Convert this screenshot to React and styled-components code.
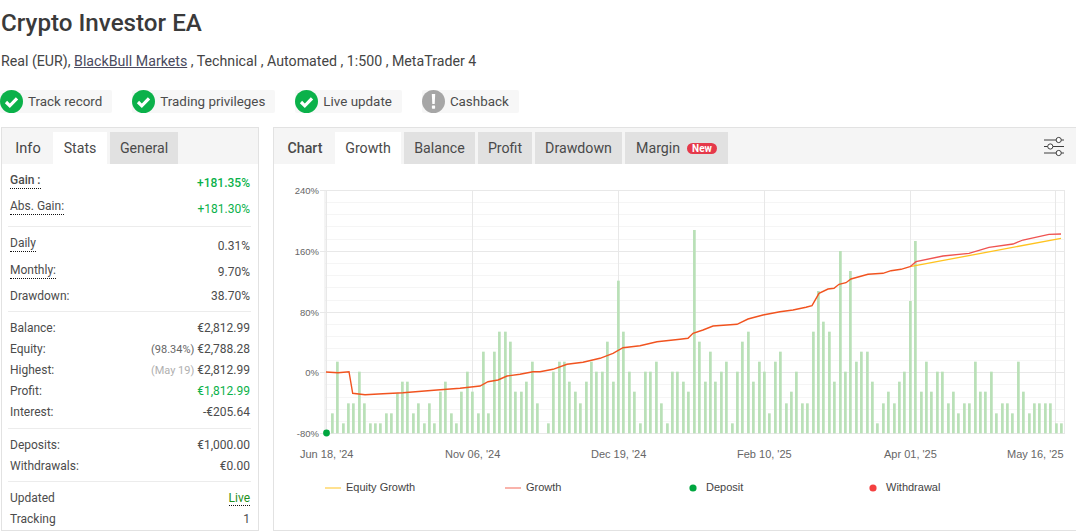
import React from "react";
import styled, { createGlobalStyle } from "styled-components";

const Global = createGlobalStyle`
  html, body { margin: 0; padding: 0; background: #fff; }
  body { font-family: Roboto, "Liberation Sans", sans-serif; color: #444; overflow: hidden; }
`;
const Page = styled.div`width: 1076px; height: 532px; overflow: hidden; padding-left: 1px; box-sizing: border-box;`;
const Title = styled.h1`margin: 0; padding-top: 8px; font-size: 24.2px; line-height: 30px; font-weight: 500; color: #3a3a3a;`;
const Sub = styled.div`margin-top: 13px; font-size: 14.2px; line-height: 20px; color: #444;`;
const BrokerLink = styled.a`color: #4a4a5e; text-decoration: underline;`;
const Badges = styled.div`display: flex; gap: 20px; margin-top: 19px; margin-left: -1px;`;
const Badge = styled.div`display: flex; align-items: center; gap: 5px; height: 23px; padding-right: 10px; background: #f7f7f7; font-size: 13.4px; color: #4c4c4c; border-radius: 2px;`;
const Main = styled.div`display: flex; gap: 14px; margin-top: 14px; height: 404px; align-items: stretch;`;
const Panel = styled.section`
  box-sizing: border-box; border: 1px solid #e2e2e2; display: flex; flex-direction: column;
  width: ${p => p.$w}; ${p => p.$open ? "border-right: none; margin-right: -1px;" : ""}
`;
const TabBar = styled.div`display: flex; align-items: flex-end; gap: 3px; height: 36px; flex: none; background: #f5f5f5; position: relative;`;
const Tab = styled.div`
  height: 32px; box-sizing: border-box; display: flex; align-items: center; justify-content: center; gap: 7px;
  font-size: 14.2px; color: #4a4a4a; width: ${p => p.$w}px; flex: none;
  padding-left: ${p => p.$kind === "head" ? 4 : 0}px;
  background: ${p => p.$kind === "on" ? "#fff" : p.$kind === "off" ? "#e1e1e1" : "transparent"};
  font-weight: ${p => p.$kind === "head" ? 500 : 400};
`;
const InfoTab = styled(Tab)`font-size: 14.6px; font-weight: 400; color: #444;`;
const NewTag = styled.span`display: inline-block; background: #e5394a; color: #fff; font-size: 10px; font-weight: 700; line-height: 11px; padding: 0 5px; border-radius: 6px;`;
const Settings = styled.div`position: absolute; right: 13px; top: 8px; width: 20px; height: 21px;`;
const Stats = styled.div`flex: 1; padding: 0 7px 0 6px;`;
const Group = styled.div`padding: ${p => p.$pad || "6px 0 5px"}; border-bottom: ${p => p.$last ? "none" : "1px solid #ececec"};`;
const Row = styled.div`
  display: flex; justify-content: space-between; padding: 0 1px 0 2px; font-size: 12px; color: #4c4c4c;
  height: ${p => p.$tall ? 26 : 21}px; align-items: ${p => p.$tall ? "flex-start" : "center"};
`;
const Label = styled.span`font-size: 12px; line-height: 15px; white-space: nowrap;`;
const Dotted = styled(Label)`border-bottom: 1px dotted #111; font-weight: ${p => p.$bold ? 500 : 400}; margin-top: ${p => p.$low ? 3 : 2}px;`;
const Value = styled.span`
  white-space: nowrap; line-height: 15px; margin-top: ${p => p.$drop ? 5 : 0}px;
  color: ${p => p.$green ? "#0bb14a" : "#4c4c4c"}; font-weight: ${p => p.$bold ? 500 : 400};
`;
const Muted = styled.span`color: ${p => p.$light ? "#b0b0b0" : "#666"}; font-size: 11px;`;
const LiveLink = styled.span`color: #1f9020; border-bottom: 1px dotted #111; line-height: 14px;`;
const ChartWrap = styled.div`flex: 1; min-height: 0;`;
const ChartSvg = styled.svg`display: block; width: 802px; height: 367px; font-family: "Liberation Sans", Arial, sans-serif;`;

const Check = () => (
  <svg width="23" height="23" viewBox="0 0 23 23">
    <circle cx="11.5" cy="11.5" r="11.5" fill="#0bb14a" />
    <path d="M6 12l3.8 3.8L17 8.3" fill="none" stroke="#fff" strokeWidth="3.2" />
  </svg>
);
const Warn = () => (
  <svg width="23" height="23" viewBox="0 0 23 23">
    <circle cx="11.5" cy="11.5" r="11.5" fill="#a6a6a6" />
    <path d="M9.8 4h3.4l-.5 10h-2.4z" fill="#fff" />
    <rect x="9.9" y="15.5" width="3.2" height="3.2" rx=".6" fill="#fff" />
  </svg>
);
const SettingsIcon = () => (
  <svg width="20" height="21" viewBox="0 0 20 21" fill="#fff" stroke="#3e3e3e" strokeWidth="1">
    <path d="M0 4h20M0 10.5h20M0 17h20" />
    <circle cx="14.7" cy="4" r="2.6" />
    <circle cx="6.3" cy="10.5" r="2.6" />
    <circle cx="14.7" cy="17" r="2.6" />
  </svg>
);

const barsA = [[187,310],[202,155],[220,340],[235,280],[250,280],[268,185],[283,280],[301,340],[316,340],[331,340],[349,310],[364,310],[382,250],[397,215],[412,215],[430,310],[445,280],[463,340],[478,280],[493,340],[511,245],[526,215],[544,310],[559,340],[574,245],[592,185],[607,245],[625,310],[640,125],[655,310],[673,125],[688,65],[706,65],[721,95],[736,245],[754,245],[769,215],[787,155],[802,280]];
const barsB = [[25,340],[40,185],[58,155],[73,155],[88,215],[106,245],[121,280],[139,215],[154,155],[169,185],[187,185],[202,95],[220,215],[235,-88],[250,65],[268,185],[283,245],[301,340],[316,185],[331,185],[349,155],[364,280],[382,340],[397,185],[412,185],[430,215],[445,245],[463,-240],[478,95],[496,215],[511,125],[526,215],[544,185],[559,155],[577,340],[592,185],[607,95],[625,65],[640,215],[658,155],[673,185],[688,310],[706,155],[721,125],[739,280],[754,245],[769,185],[787,280],[802,280]];
const barsC = [[22,65],[37,-57],[52,35],[70,65],[85,215],[103,-177],[118,185],[133,-117],[151,155],[166,125],[184,125],[199,215],[214,340],[232,280],[247,245],[265,280],[280,215],[295,185],[313,-27],[328,-207],[346,245],[361,155],[376,245],[394,185],[409,185],[427,280],[442,245],[457,310],[475,280],[490,280],[508,155],[523,245],[538,245],[556,185],[571,310],[589,280],[604,280],[619,310],[637,155],[652,245],[670,310],[685,280],[700,280],[718,280],[733,280],[751,340],[766,340]];
const bars = [
  ...barsA.map(([x, y]) => [270 + x / 3, 310 + y / 3]),
  ...barsB.map(([x, y]) => [540 + x / 3, 310 + y / 3]),
  ...barsC.map(([x, y]) => [806 + x / 3, 310 + y / 3]),
];
const shared = "326,372 338,372.7 349,371.7 352.7,393.3 365,394.7 383,393.7 403,392.7 437,390 460,388.3 480,386 488,381.7 498,380 507,376 520,374.3 533,371.7 540,371.7 553,369.3 567,364.3 583,362.3 600,358.3 613,353.3 623,347.7 640,345.7 657,341.7 680,339.3 688,338.3 693,333.3 703,330 713,326 737,324.3 748,319 763,315 780,311.7 793,310 806,307.3 812,305.7 819,293.3 828,289 834,288.3 839,284.3 846,282.7 851,279 868,274.3 883,273.3 891,270.7 901,269.3 910,266.7";
const tail = "910,266.7 916,261.7 943,256 969,253.3 989,247.3 1013,244 1023,240 1049,234.3 1061,234";
const equityTail = "910,266.7 1061,238.3";
const hMajor = [190.5, 251.5, 312.5, 372.5, 433.5];
const hMinor = [202.5, 214.5, 226.5, 239.5, 263.5, 275.5, 287.5, 300.5, 324.5, 336.5, 348.5, 360.5, 384.5, 397.5, 409.5, 421.5];
const vLines = [326.5, 472.5, 618.5, 764.5, 910.5, 1055.5, 1064.5];
const yLabels = [["240%", 194], ["160%", 255], ["80%", 316], ["0%", 376], ["-80%", 437]];
const xLabels = [["Jun 18, '24", 300], ["Nov 06, '24", 445], ["Dec 19, '24", 591], ["Feb 10, '25", 737], ["Apr 01, '25", 884], ["May 16, '25", 1007]];

const Chart = () => (
  <ChartSvg viewBox="274 164 802 367">
    {hMinor.map(y => <line key={y} x1="325" x2="1064" y1={y} y2={y} stroke="#f5f5f5" />)}
    {hMajor.map(y => <line key={y} x1="320" x2="1064" y1={y} y2={y} stroke="#e8e8e8" />)}
    <line x1="325" x2="325" y1="190" y2="434" stroke="#e8e8e8" />
    {vLines.map(x => <line key={x} x1={x} x2={x} y1="190" y2="434" stroke="#e8e8e8" />)}
    {bars.map(([x, y], i) => <rect key={i} x={x - 1.3} y={y} width="2.7" height={433.3 - y} fill="#b9e0b7" />)}
    <polyline points={equityTail} fill="none" stroke="#ffc31f" strokeWidth="1.3" />
    <polyline points={shared} fill="none" stroke="#f1531f" strokeWidth="1.4" />
    <polyline points={tail} fill="none" stroke="#ef5350" strokeWidth="1.3" />
    <circle cx="326.5" cy="433" r="3.4" fill="#00a63f" />
    <g fontSize="9.5" fill="#666" textAnchor="end">
      {yLabels.map(([t, y]) => <text key={t} x="319" y={y}>{t}</text>)}
    </g>
    <g fontSize="11" fill="#666">
      {xLabels.map(([t, x]) => <text key={t} x={x} y="458">{t}</text>)}
    </g>
    <g fontSize="11" fill="#444">
      <line x1="325" x2="341" y1="488" y2="488" stroke="#ffd76b" strokeWidth="1.5" />
      <text x="346" y="491">Equity Growth</text>
      <line x1="505" x2="521" y1="488" y2="488" stroke="#f79a8f" strokeWidth="1.5" />
      <text x="526" y="491">Growth</text>
      <circle cx="693" cy="488" r="3.6" fill="#00a63f" />
      <text x="706" y="491">Deposit</text>
      <circle cx="873" cy="488" r="3.6" fill="#f44040" />
      <text x="886" y="491">Withdrawal</text>
    </g>
  </ChartSvg>
);

export default function App() {
  return (
    <Page>
      <Global />
      <Title>Crypto Investor EA</Title>
      <Sub>Real (EUR), <BrokerLink>BlackBull Markets</BrokerLink> , Technical , Automated , 1:500 , MetaTrader 4</Sub>
      <Badges>
        <Badge><Check />Track record</Badge>
        <Badge><Check />Trading privileges</Badge>
        <Badge><Check />Live update</Badge>
        <Badge><Warn />Cashback</Badge>
      </Badges>
      <Main>
        <Panel $w="258px">
          <TabBar>
            <InfoTab $w={48} $kind="head">Info</InfoTab>
            <Tab $w={54} $kind="on">Stats</Tab>
            <Tab $w={68} $kind="off">General</Tab>
          </TabBar>
          <Stats>
            <Group $pad="7px 0 3px">
              <Row $tall><Dotted $bold>Gain :</Dotted><Value $drop $green $bold>+181.35%</Value></Row>
              <Row $tall><Dotted>Abs. Gain:</Dotted><Value $drop $green>+181.30%</Value></Row>
            </Group>
            <Group $pad="7px 0 4px">
              <Row $tall><Dotted>Daily</Dotted><Value $drop>0.31%</Value></Row>
              <Row $tall><Dotted $low>Monthly:</Dotted><Value $drop>9.70%</Value></Row>
              <Row><Label>Drawdown:</Label><Value>38.70%</Value></Row>
            </Group>
            <Group>
              <Row><Label>Balance:</Label><Value>€2,812.99</Value></Row>
              <Row><Label>Equity:</Label><Value><Muted>(98.34%)</Muted> €2,788.28</Value></Row>
              <Row><Label>Highest:</Label><Value><Muted $light>(May 19)</Muted> €2,812.99</Value></Row>
              <Row><Label>Profit:</Label><Value $green>€1,812.99</Value></Row>
              <Row><Label>Interest:</Label><Value>-€205.64</Value></Row>
            </Group>
            <Group $pad="6px 0 4px">
              <Row><Label>Deposits:</Label><Value>€1,000.00</Value></Row>
              <Row><Label>Withdrawals:</Label><Value>€0.00</Value></Row>
            </Group>
            <Group $last>
              <Row><Label>Updated</Label><LiveLink>Live</LiveLink></Row>
              <Row><Label>Tracking</Label><Value>1</Value></Row>
            </Group>
          </Stats>
        </Panel>
        <Panel $w="804px" $open>
          <TabBar>
            <Tab $w={58} $kind="head">Chart</Tab>
            <Tab $w={66} $kind="on">Growth</Tab>
            <Tab $w={71} $kind="off">Balance</Tab>
            <Tab $w={54} $kind="off">Profit</Tab>
            <Tab $w={87} $kind="off">Drawdown</Tab>
            <Tab $w={103} $kind="off">Margin <NewTag>New</NewTag></Tab>
            <Settings><SettingsIcon /></Settings>
          </TabBar>
          <ChartWrap><Chart /></ChartWrap>
        </Panel>
      </Main>
    </Page>
  );
}
